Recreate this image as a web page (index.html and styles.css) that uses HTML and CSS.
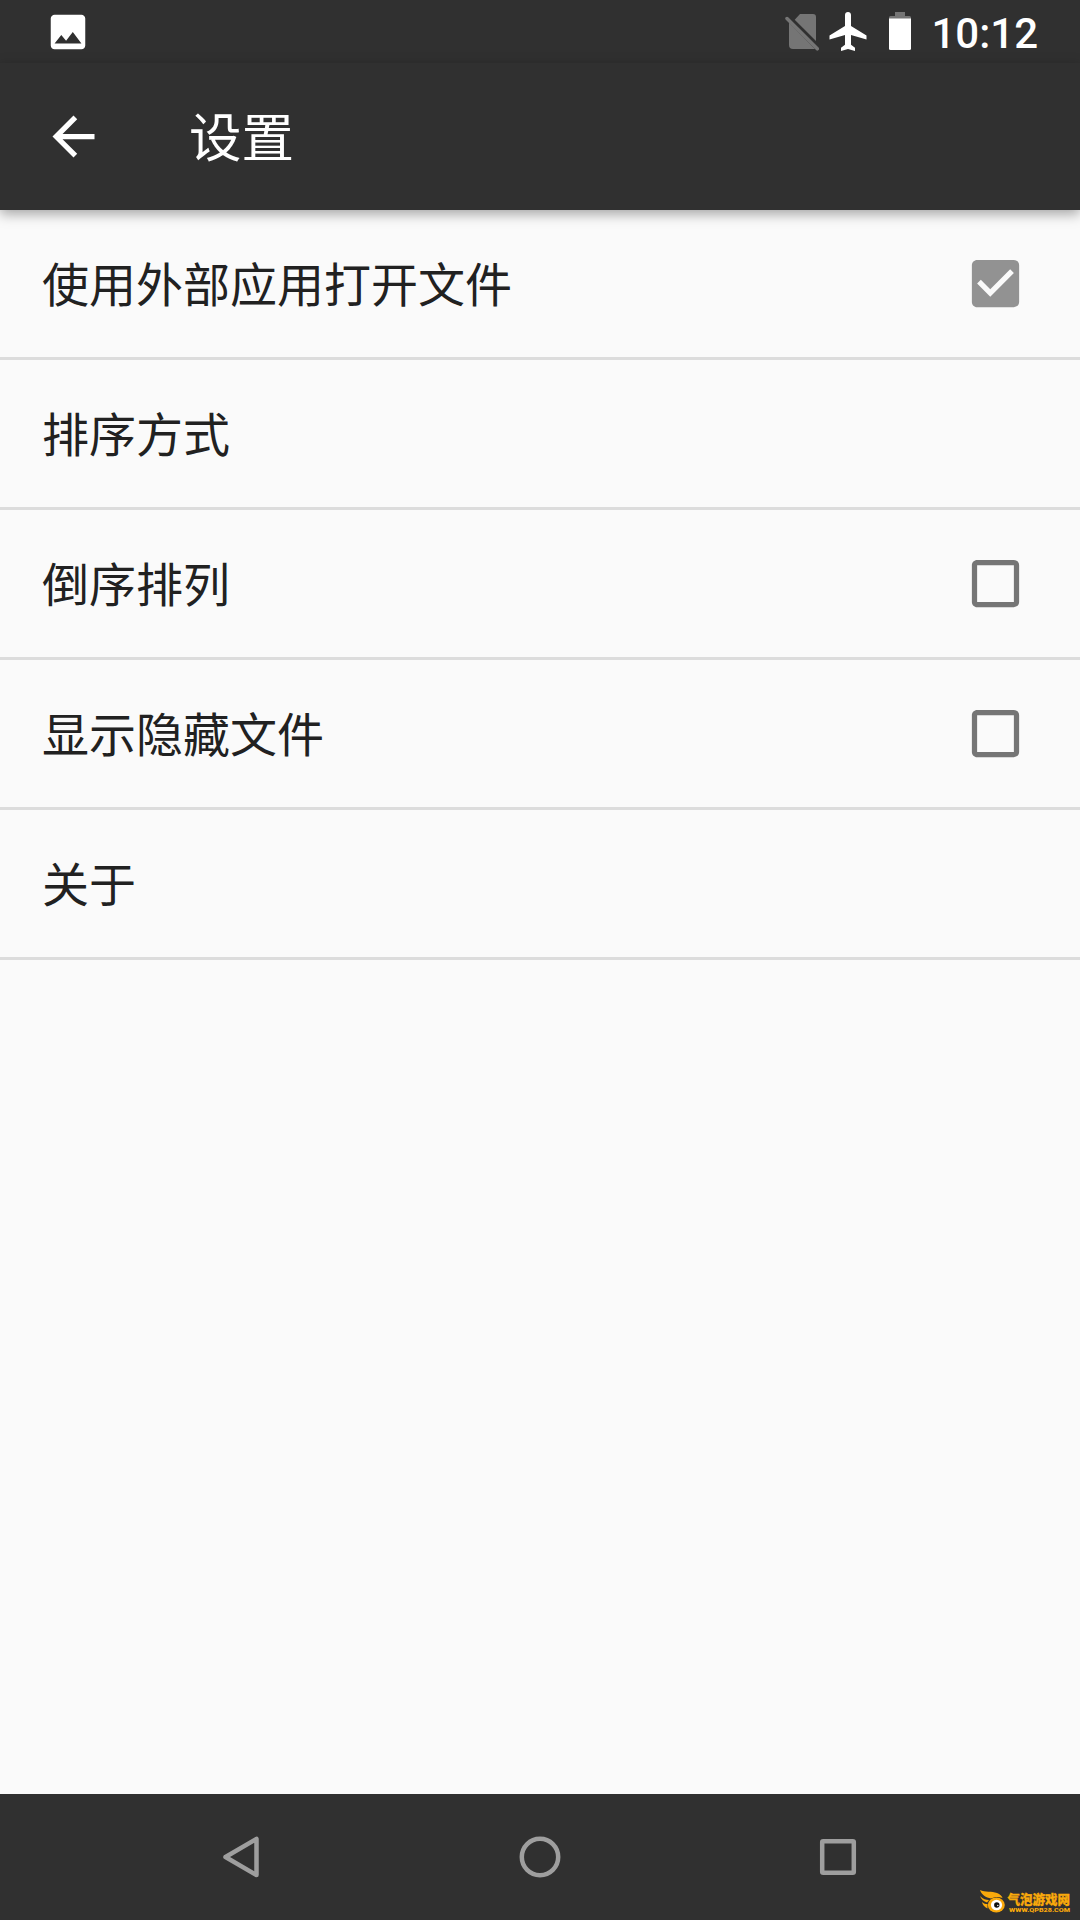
FILE: index.html
```html
<!DOCTYPE html>
<html lang="zh-CN">
<head>
    <meta charset="UTF-8">
    <meta name="viewport" content="width=device-width, initial-scale=1.0">
    <title>设置</title>
    <link rel="stylesheet" href="styles.css">
</head>
<body>
    <!-- Status bar -->
    <div class="status-bar">
        <svg class="picture-icon" viewBox="0 0 24 24"><path d="M21 19V5c0-1.1-.9-2-2-2H5c-1.1 0-2 .9-2 2v14c0 1.1.9 2 2 2h14c1.1 0 2-.9 2-2zM8.5 13.5l2.5 3.01L14.5 12l4.5 6H5l3.5-4.5z"/></svg>
        <div class="status-right">
            <svg class="sim-icon" viewBox="0 0 34 37">
                <path d="M15 0h13q3 0 3 3v24L9.700 5.700zM4 8.500l26 26.500H8q-4 0-4-4z"/>
                <path class="sim-slash" d="M2 4.500l30.300 30.300"/>
            </svg>
            <svg class="plane-icon" viewBox="0 0 38 39"><path d="M19 0c-1.800 0-3 1.300-3 3v11L.5 23.500V27.500L16 23v9.700l-4 3V39l7-2 7 2v-3.300l-4-3V23l15.500 4.500V23.500L22 14V3c0-1.700-1.200-3-3-3z"/></svg>
            <svg class="battery-icon" viewBox="0 0 22 38">
                <path class="battery-empty" d="M6 0h10v4h4.500Q22 4 22 5.500V7H0V5.500Q0 4 1.500 4H6z"/>
                <path d="M0 6.500h22v30q0 1.500-1.500 1.500h-19Q0 38 0 36.500z"/>
            </svg>
            <span class="clock">10:12</span>
        </div>
    </div>

    <!-- Title bar -->
    <div class="top-bar">
        <svg class="back-button" viewBox="0 0 24 24"><path d="M20 11H7.830l5.590-5.590L12 4l-8 8 8 8 1.410-1.410L7.830 13H20v-2z"/></svg>
        <h1>设置</h1>
    </div>

    <!-- Settings list -->
    <div class="settings">
        <div class="row">
            <span>使用外部应用打开文件</span>
            <svg class="checkbox checked" viewBox="0 0 24 24"><path d="M19 3H5c-1.110 0-2 .9-2 2v14c0 1.100.890 2 2 2h14c1.110 0 2-.9 2-2V5c0-1.100-.890-2-2-2zm-9 14l-5-5 1.410-1.410L10 14.170l7.590-7.590L19 8l-9 9z"/></svg>
        </div>
        <div class="row">
            <span>排序方式</span>
        </div>
        <div class="row">
            <span>倒序排列</span>
            <svg class="checkbox" viewBox="0 0 24 24"><path d="M19 5v14H5V5h14m0-2H5c-1.100 0-2 .9-2 2v14c0 1.100.9 2 2 2h14c1.100 0 2-.9 2-2V5c0-1.100-.9-2-2-2z"/></svg>
        </div>
        <div class="row">
            <span>显示隐藏文件</span>
            <svg class="checkbox" viewBox="0 0 24 24"><path d="M19 5v14H5V5h14m0-2H5c-1.100 0-2 .9-2 2v14c0 1.100.9 2 2 2h14c1.100 0 2-.9 2-2V5c0-1.100-.9-2-2-2z"/></svg>
        </div>
        <div class="row">
            <span>关于</span>
        </div>
    </div>

    <!-- Navigation bar -->
    <div class="nav-bar">
        <svg class="nav-icon" viewBox="0 0 48 48"><path d="M38.500 5.900v36.200L7.500 24z"/></svg>
        <svg class="nav-icon" viewBox="0 0 48 48"><circle cx="24" cy="24" r="18.200"/></svg>
        <svg class="nav-icon" viewBox="0 0 48 48"><rect x="8.200" y="8.200" width="31.600" height="31.600" rx="1"/></svg>

        <!-- Site mark in the corner -->
        <svg class="site-mark" viewBox="0 0 92 24">
            <path class="wing" d="M0 0c5 2.500 12 1 17 3 3 1.200 5 3 5.500 5C18 6.200 14 7 11 8.500 6 7.500 1.500 5 0 0zM0 6c3 3 6 4 9 4l-2 2.500C4 11.500 1 9.500 0 6zM2 12c2 1.700 3.500 2 5.500 2v4.500C4.500 17 2.500 15 2 12z"/>
            <ellipse class="wing" cx="16.300" cy="15" rx="8.500" ry="7.500"/>
            <ellipse class="eye" cx="16.500" cy="15" rx="5.600" ry="5.200"/>
            <circle class="pupil" cx="16.800" cy="15" r="2.700"/>
            <circle class="eye" cx="17.800" cy="15.500" r=".7"/>
            <text class="mark-name" x="27.500" y="14" textLength="62.500" lengthAdjust="spacingAndGlyphs">气泡游戏网</text>
            <text class="mark-url" x="29" y="22" textLength="61" lengthAdjust="spacingAndGlyphs">WWW.QPB28.COM</text>
        </svg>
    </div>
</body>
</html>
```
FILE: styles.css
```css
body {
    margin: 0;
    padding: 0;
    height: 1920px;
    display: flex;
    flex-direction: column;
    overflow: hidden;
    background-color: #fafafa;
    font-family: Roboto, "Noto Sans CJK SC", sans-serif;
}

svg {
    display: block;
    flex: none;
}

/* Status bar */
.status-bar {
    box-sizing: border-box;
    height: 63px;
    padding: 0 42px 0 45.5px;
    display: flex;
    justify-content: space-between;
    align-items: center;
    background-color: #303030;
    color: #ffffff;
    fill: #ffffff;
}

.picture-icon {
    width: 46px;
    height: 46px;
    margin-left: -0.5px;
}

.status-right {
    display: flex;
    align-items: center;
}

.sim-icon {
    width: 34px;
    height: 37px;
    margin-right: 10px;
    margin-top: 2px;
    fill: #757575;
}

.sim-slash {
    stroke: #757575;
    stroke-width: 3.5;
    stroke-linecap: round;
}

.plane-icon {
    width: 38px;
    height: 39px;
    margin-right: 22px;
}

.battery-icon {
    width: 22px;
    height: 38px;
    margin-right: 20px;
    margin-bottom: 2px;
}

.battery-empty {
    fill: #757575;
}

.clock {
    font-size: 42px;
    font-weight: 500;
    line-height: 63px;
    margin-top: 3px;
}

/* Title bar */
.top-bar {
    height: 147px;
    padding-left: 42px;
    display: flex;
    align-items: center;
    gap: 84px;
    background-color: #303030;
    box-shadow: 0 4px 12px rgba(0, 0, 0, 0.35);
}

.back-button {
    width: 63px;
    height: 63px;
    fill: #ffffff;
}

h1 {
    margin: 0;
    padding-bottom: 5px;
    font-size: 52.5px;
    font-weight: 400;
    color: #ffffff;
}

/* Settings list */
.settings {
    flex: 1;
}

.row {
    box-sizing: border-box;
    height: 150px;
    padding: 0 53px 0 42px;
    display: flex;
    justify-content: space-between;
    align-items: center;
    border-bottom: 3px solid #dcdcdc;
    font-size: 47px;
    color: #212121;
}

.row span {
    padding-bottom: 4px;
}

.checkbox {
    width: 63px;
    height: 63px;
    margin-bottom: 1px;
    fill: #757575;
}

.checked {
    fill: #929292;
}

/* Bottom navigation */
.nav-bar {
    position: relative;
    height: 126px;
    display: flex;
    justify-content: center;
    align-items: center;
    gap: 250px;
    background-color: #303030;
}

.nav-icon {
    width: 48px;
    height: 48px;
    fill: none;
    stroke: #9e9e9e;
    stroke-width: 4.5;
    stroke-linejoin: round;
}

.site-mark {
    position: absolute;
    right: 8px;
    bottom: 6px;
    width: 92px;
    height: 24px;
}

.wing {
    fill: #f9a90b;
}

.eye {
    fill: #ffffff;
}

.pupil {
    fill: #111111;
}

.mark-name {
    font-size: 13px;
    font-weight: 900;
    fill: #f9a90b;
    stroke: #f9a90b;
    stroke-width: 0.3;
}

.mark-url {
    font-size: 6px;
    font-weight: 900;
    fill: #f9a90b;
}
```
